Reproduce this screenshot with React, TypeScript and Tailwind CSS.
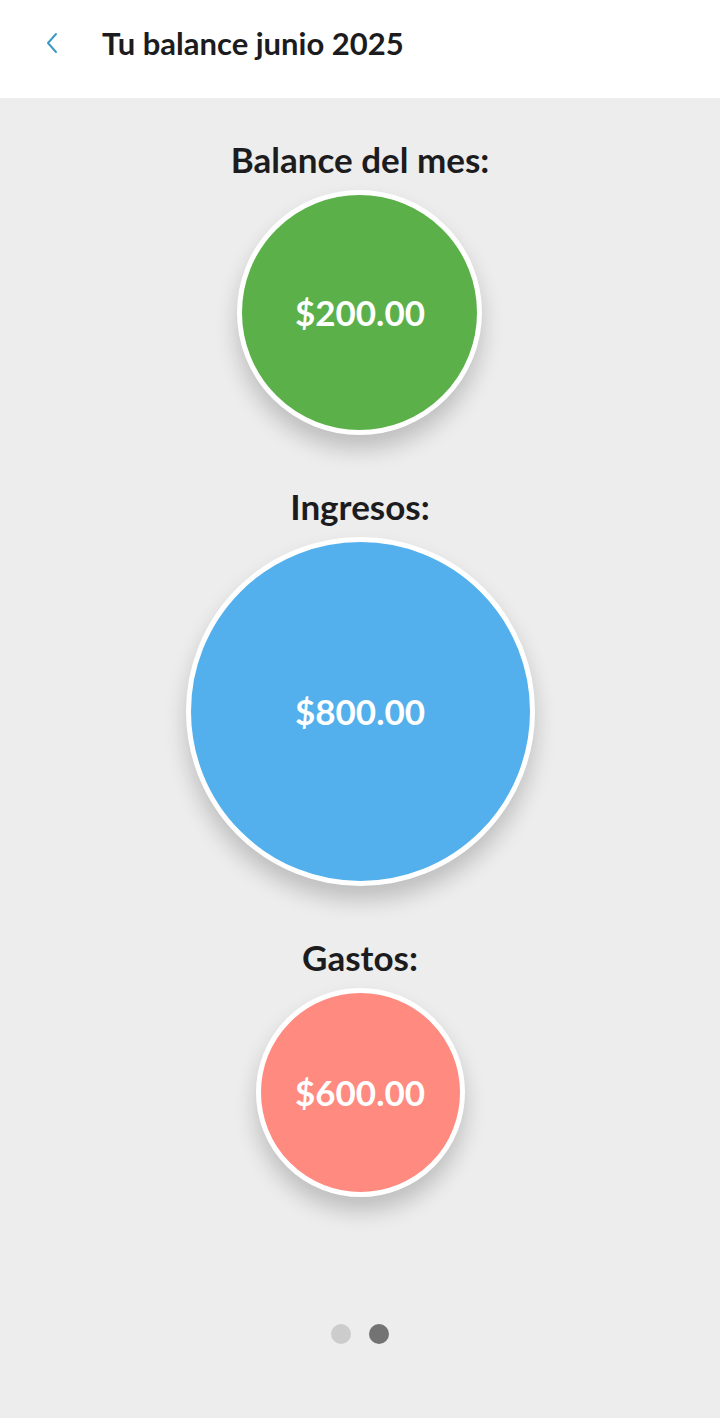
export default function App() {
  const items = [
    { label: 'Balance del mes:', amount: '$200.00', size: 'size-[245px]', color: 'bg-[#5bb04a]' },
    { label: 'Ingresos:', amount: '$800.00', size: 'size-[349px]', color: 'bg-[#53b0ec]' },
    { label: 'Gastos:', amount: '$600.00', size: 'size-[209px]', color: 'bg-[#ff8a80]' },
  ];

  return (
    <div className="flex min-h-screen flex-col bg-[#ededed] font-['Lato',sans-serif]">
      <header className="flex h-[98px] shrink-0 items-center bg-white pb-[12px]">
        <button className="ml-[40px] flex size-6 items-center justify-center">
          <svg viewBox="0 0 24 24" className="size-6" fill="none" stroke="#3d9ac2" strokeWidth="2" strokeLinecap="round" strokeLinejoin="round">
            <polyline points="16,3 8,12 16,21" />
          </svg>
        </button>
        <h1 className="ml-[38px] text-[31px] leading-[38px] font-bold text-[#1c1c1e]">Tu balance junio 2025</h1>
      </header>

      <main className="flex flex-col items-center pt-[42px]">
        {items.map((it, i) => (
          <section key={it.label} className={`flex flex-col items-center ${i > 0 ? 'mt-[52px]' : ''}`}>
            <h2 className="text-[35px] leading-[38px] font-bold text-[#1c1c1e]">{it.label}</h2>
            <div
              className={`mt-[12px] flex items-center justify-center rounded-full border-[5px] border-white shadow-[0_14px_22px_rgba(0,0,0,0.2)] ${it.size} ${it.color}`}
            >
              <span className="text-[35px] font-bold text-white">{it.amount}</span>
            </div>
          </section>
        ))}

        <div className="mt-[127px] flex items-center gap-[18px]">
          <span className="size-5 rounded-full bg-[#cccccc]" />
          <span className="size-5 rounded-full bg-[#737373]" />
        </div>
      </main>
    </div>
  );
}
